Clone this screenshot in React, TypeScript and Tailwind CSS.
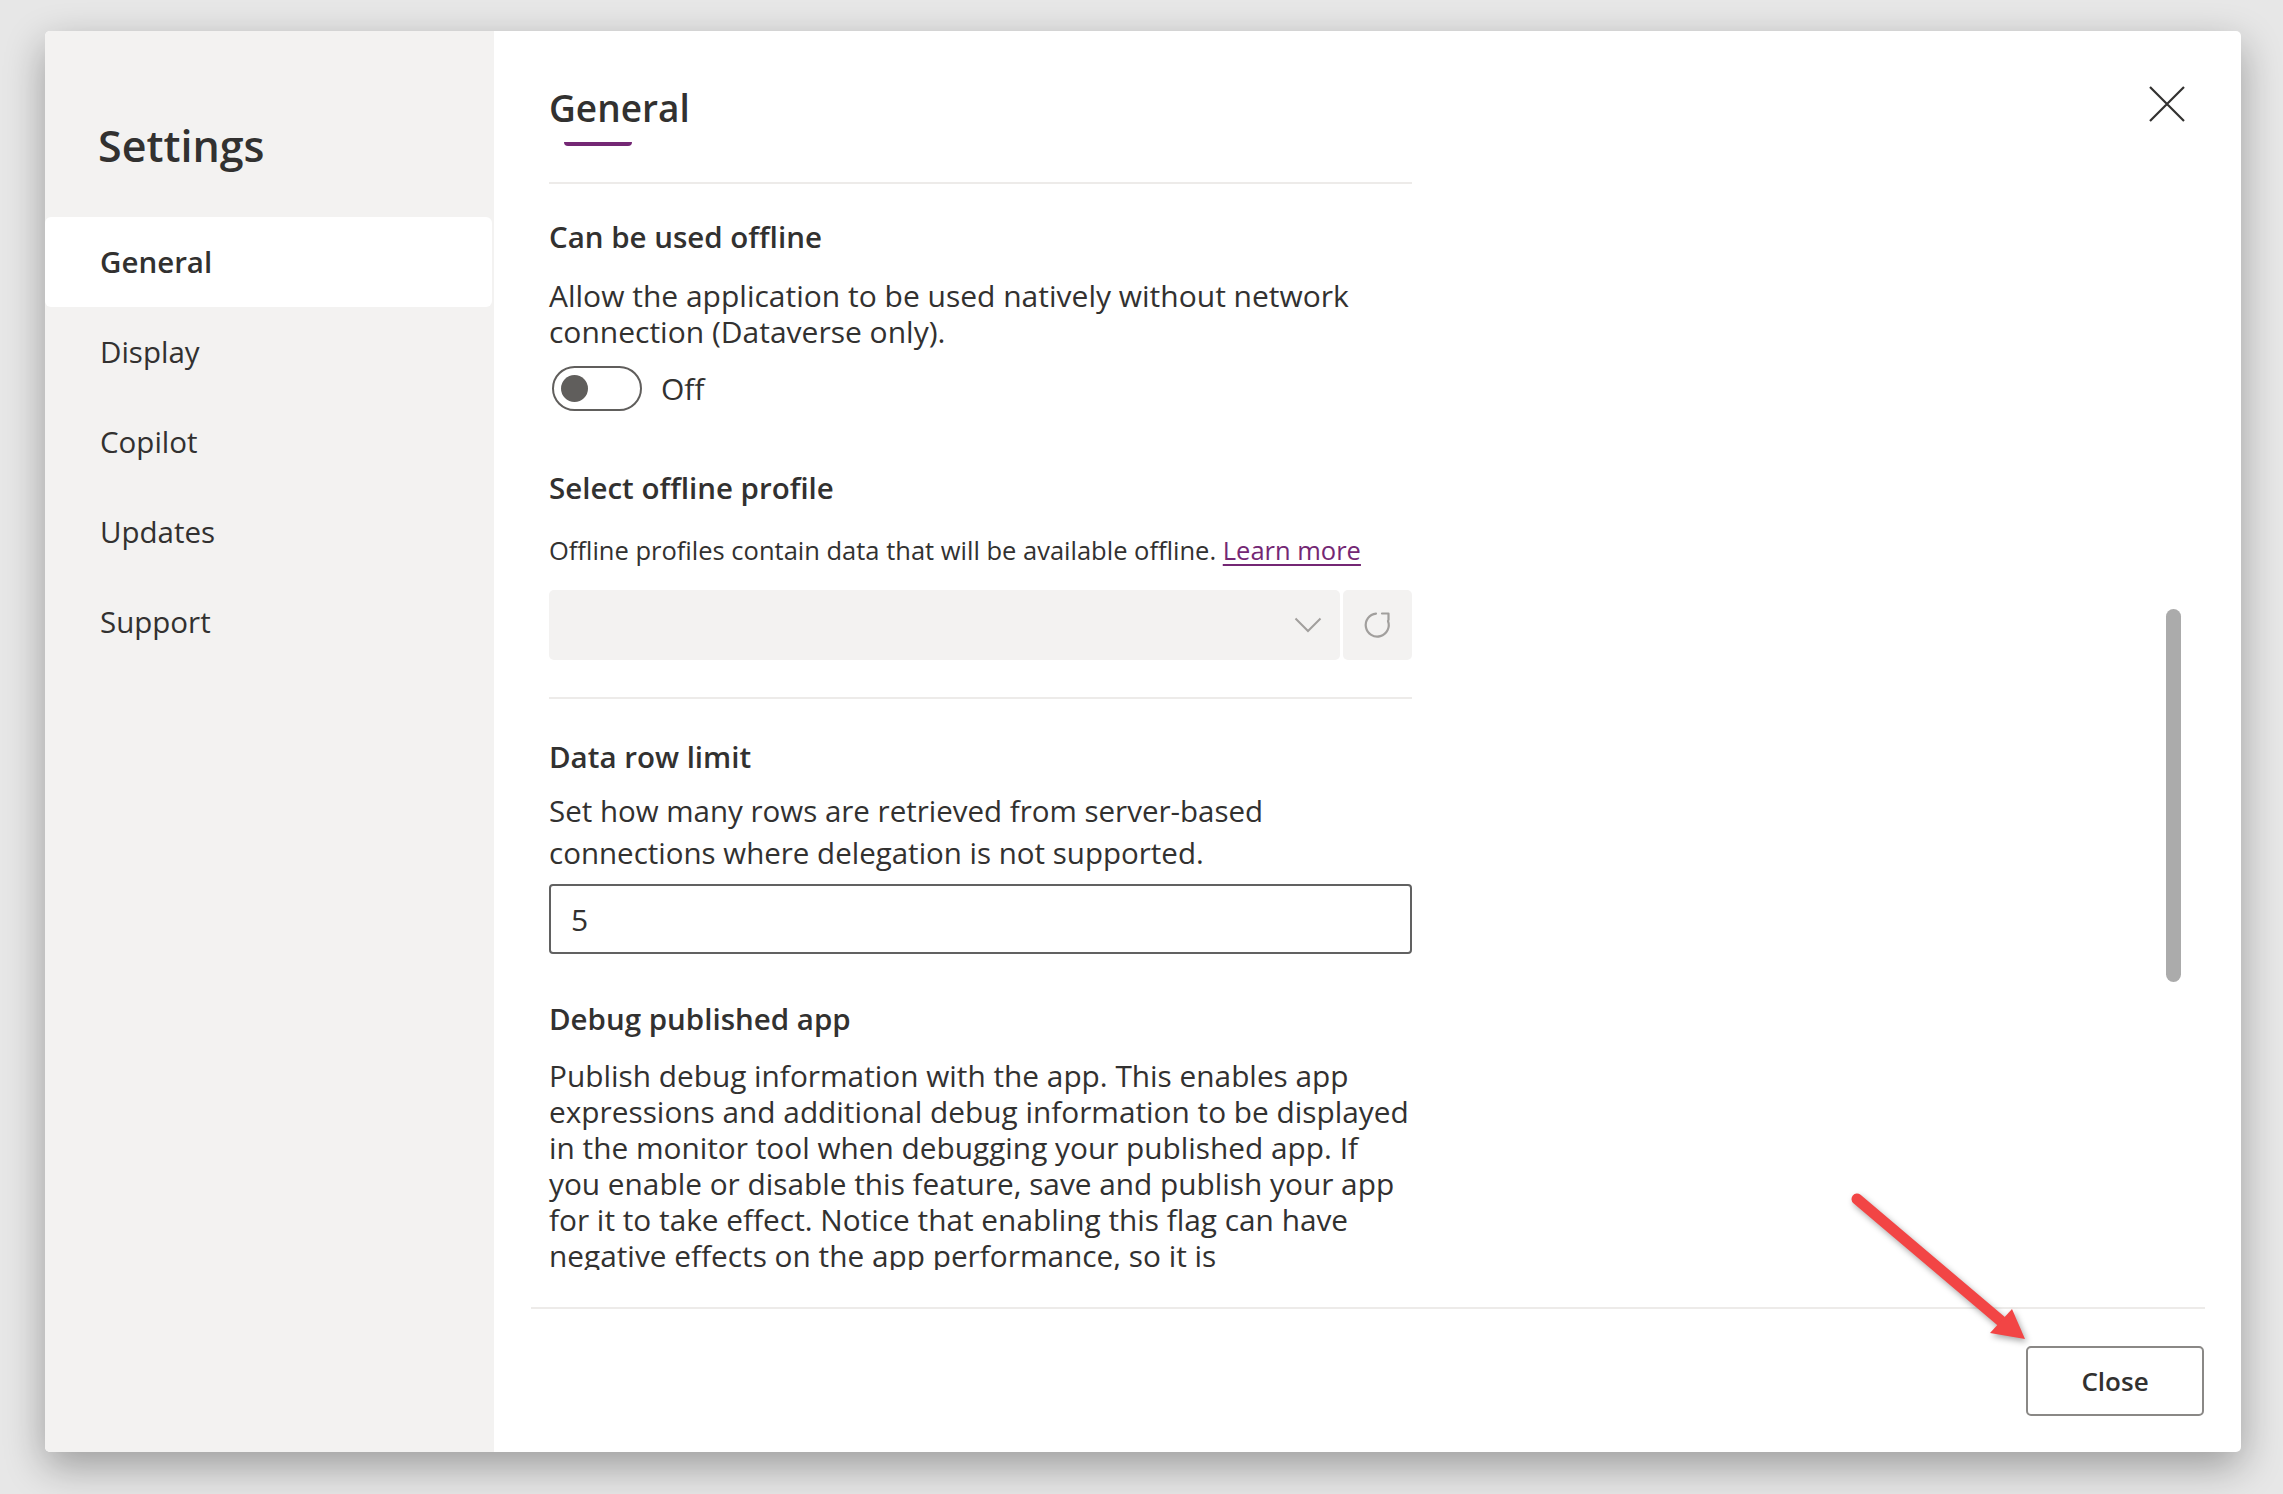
import { useState } from "react";

const navItems = ["General", "Display", "Copilot", "Updates", "Support"];

function Chevron() {
  return (
    <svg width="28" height="16" viewBox="0 0 28 16" fill="none">
      <path d="M1.5 1.5 L14 14 L26.5 1.5" stroke="#a19f9d" strokeWidth="2" />
    </svg>
  );
}

function Refresh() {
  return (
    <svg width="30" height="30" viewBox="0 0 30 30" fill="none">
      <path
        d="M13 3.6 A11.5 11.5 0 1 0 25 11"
        stroke="#a19f9d"
        strokeWidth="2.2"
        strokeLinecap="round"
      />
      <path
        d="M19 3.5 H25.5 V10"
        stroke="#a19f9d"
        strokeWidth="2.2"
        strokeLinecap="round"
        strokeLinejoin="round"
      />
    </svg>
  );
}

function CloseX() {
  return (
    <svg width="38" height="38" viewBox="0 0 38 38" fill="none">
      <path d="M2 2 L36 36 M36 2 L2 36" stroke="#323130" strokeWidth="2.2" />
    </svg>
  );
}

export default function App() {
  const [active, setActive] = useState("General");
  const [offline, setOffline] = useState(false);

  return (
    <div className="relative h-[1494px] w-[2283px] overflow-hidden bg-[#e7e7e7] pl-[45px] pt-[31px] font-['Segoe_UI','Open_Sans',sans-serif] text-[#323130]">
      <div className="flex h-[1421px] w-[2196px] overflow-hidden rounded-[5px] bg-white shadow-[0_14px_40px_rgba(0,0,0,0.33)]">
        {/* Sidebar */}
        <aside className="w-[449px] shrink-0 bg-[#f3f2f1] pt-[85px]">
          <h1 className="pl-[53px] text-[43px] font-semibold leading-[60px]">Settings</h1>
          <nav className="mt-[41px] pr-[2px]">
            {navItems.map((item) => {
              const on = item === active;
              return (
                <button
                  key={item}
                  type="button"
                  onClick={() => setActive(item)}
                  className={`flex h-[90px] w-full items-center rounded-[6px] pl-[55px] text-left text-[29.5px] ${
                    on ? "bg-white font-semibold" : ""
                  }`}
                >
                  {item}
                </button>
              );
            })}
          </nav>
        </aside>

        {/* Main */}
        <main className="flex min-w-0 flex-1 flex-col">
          <div className="flex items-start justify-between pl-[55px] pr-[55px]">
            <h2 className="mt-[52px] text-[37px] font-semibold leading-[50px]">General</h2>
            <button type="button" className="mt-[54px]">
              <CloseX />
            </button>
          </div>
          <div className="ml-[70px] mt-[9px] h-[4px] w-[68px] rounded-b-full bg-[#742774]" />

          <div className="flex h-[1124px] overflow-hidden">
            <div className="w-[918px] shrink-0 pl-[55px]">
              <div className="mt-[36px] h-[2px] bg-[#edebe9]" />

              <h3 className="mt-[33px] text-[29.5px] font-semibold leading-[40px]">Can be used offline</h3>
              <p className="mt-[21px] whitespace-nowrap text-[30px] leading-[36px]">
                Allow the application to be used natively without network
                <br />
                connection (Dataverse only).
              </p>
              <div className="mt-[16px] flex h-[45px] items-center pl-[3px]">
                <button
                  type="button"
                  onClick={() => setOffline(!offline)}
                  className={`flex h-[45px] w-[90px] items-center rounded-full border-2 px-[7px] ${
                    offline ? "justify-end border-[#742774] bg-[#742774]" : "border-[#605e5c] bg-white"
                  }`}
                >
                  <span className={`h-[27px] w-[27px] rounded-full ${offline ? "bg-white" : "bg-[#605e5c]"}`} />
                </button>
                <span className="ml-[19px] text-[30px]">{offline ? "On" : "Off"}</span>
              </div>

              <h3 className="mt-[57px] text-[29.5px] font-semibold leading-[40px]">Select offline profile</h3>
              <p className="mt-[25px] whitespace-nowrap text-[25.5px] leading-[34px]">
                Offline profiles contain data that will be available offline.{" "}
                <a href="#" className="text-[#742774] underline underline-offset-[4px]">
                  Learn more
                </a>
              </p>
              <div className="mt-[23px] flex h-[70px] gap-[3px]">
                <div className="flex flex-1 items-center justify-end rounded-[5px] bg-[#f3f2f1] pr-[18px]">
                  <Chevron />
                </div>
                <div className="flex w-[69px] items-center justify-center rounded-[5px] bg-[#f3f2f1]">
                  <Refresh />
                </div>
              </div>

              <div className="mt-[37px] h-[2px] bg-[#edebe9]" />

              <h3 className="mt-[38px] text-[29.5px] font-semibold leading-[40px]">Data row limit</h3>
              <p className="mt-[13px] whitespace-nowrap text-[29.5px] leading-[42px]">
                Set how many rows are retrieved from server-based
                <br />
                connections where delegation is not supported.
              </p>
              <div className="mt-[10px] flex h-[70px] items-center rounded-[4px] border-2 border-[#616161] pl-[20px] text-[30px]">
                5
              </div>

              <h3 className="mt-[45px] text-[29.5px] font-semibold leading-[40px]">Debug published app</h3>
              <p className="mt-[19px] whitespace-nowrap text-[29.8px] leading-[36px]">
                Publish debug information with the app. This enables app
                <br />
                expressions and additional debug information to be displayed
                <br />
                in the monitor tool when debugging your published app. If
                <br />
                you enable or disable this feature, save and publish your app
                <br />
                for it to take effect. Notice that enabling this flag can have
                <br />
                negative effects on the app performance, so it is
              </p>
            </div>
            <div className="flex-1" />
            <div className="mr-[60px] w-[15px] pt-[463px]">
              <div className="h-[373px] rounded-full bg-[#ababab]" />
            </div>
          </div>

          <div className="ml-[37px] mr-[36px] mt-[37px] h-[2px] bg-[#edebe9]" />
          <div className="flex justify-end pr-[37px] pt-[37px]">
            <button
              type="button"
              className="h-[70px] w-[178px] rounded-[5px] border-2 border-[#8a8886] bg-white text-[26px] font-semibold"
            >
              Close
            </button>
          </div>
        </main>
      </div>

      {/* annotation arrow */}
      <svg
        className="pointer-events-none absolute left-0 top-0 drop-shadow-[2px_3px_3px_rgba(0,0,0,0.35)]"
        width="2283"
        height="1494"
        viewBox="0 0 2283 1494"
      >
        <line x1="1857" y1="1199" x2="2001" y2="1321" stroke="#f24545" strokeWidth="11" strokeLinecap="round" />
        <polygon points="2025,1339 1990,1333 2012,1309" fill="#f24545" />
      </svg>
    </div>
  );
}
